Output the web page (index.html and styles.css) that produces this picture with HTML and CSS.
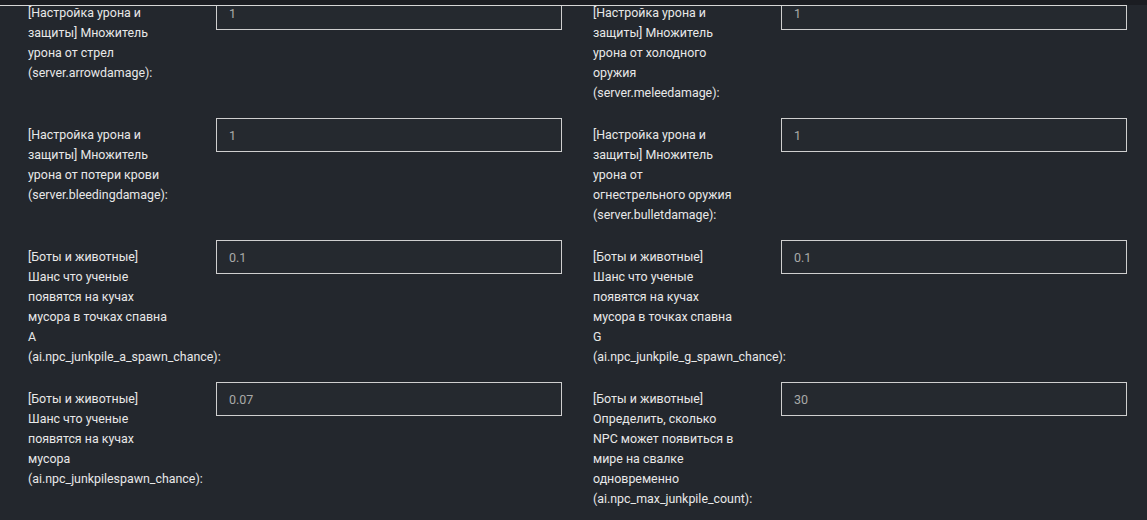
FILE: index.html
```html
<!DOCTYPE html>
<html lang="ru">
<head>
    <meta charset="UTF-8">
    <meta name="viewport" content="width=device-width, initial-scale=1.0">
    <title>Настройки сервера</title>
    <link rel="stylesheet" href="styles.css">
</head>
<body>
    <div class="topbar"><div class="topbar-line"></div></div>

    <div class="settings">
        <div class="field">
            <label class="field-label">[Настройка урона и защиты] Множитель урона от стрел (server.arrowdamage):</label>
            <input class="field-input" type="text" value="1">
        </div>
        <div class="field">
            <label class="field-label">[Настройка урона и защиты] Множитель урона от холодного оружия (server.meleedamage):</label>
            <input class="field-input" type="text" value="1">
        </div>

        <div class="field">
            <label class="field-label">[Настройка урона и защиты] Множитель урона от потери крови (server.bleedingdamage):</label>
            <input class="field-input" type="text" value="1">
        </div>
        <div class="field">
            <label class="field-label">[Настройка урона и защиты] Множитель урона от огнестрельного оружия (server.bulletdamage):</label>
            <input class="field-input" type="text" value="1">
        </div>

        <div class="field">
            <label class="field-label">[Боты и животные] Шанс что ученые появятся на кучах мусора в точках спавна A (ai.npc_junkpile_a_spawn_chance):</label>
            <input class="field-input" type="text" value="0.1">
        </div>
        <div class="field">
            <label class="field-label">[Боты и животные] Шанс что ученые появятся на кучах мусора в точках спавна G (ai.npc_junkpile_g_spawn_chance):</label>
            <input class="field-input" type="text" value="0.1">
        </div>

        <div class="field">
            <label class="field-label">[Боты и животные] Шанс что ученые появятся на кучах мусора (ai.npc_junkpilespawn_chance):</label>
            <input class="field-input" type="text" value="0.07">
        </div>
        <div class="field">
            <label class="field-label">[Боты и животные] Определить, сколько NPC может появиться в мире на свалке одновременно (ai.npc_max_junkpile_count):</label>
            <input class="field-input" type="text" value="30">
        </div>
    </div>
</body>
</html>
```

FILE: styles.css
```css
html, body {
    margin: 0;
    padding: 0;
    background: #23272d;
    font-family: 'Roboto', 'Liberation Sans', sans-serif;
    font-size: 12.4px;
    color: #e8e8e8;
    overflow: hidden;
}

.topbar {
    position: fixed;
    top: 0;
    left: 0;
    right: 0;
    height: 5px;
    background: #1b1d22;
    z-index: 10;
}

.topbar-line {
    position: absolute;
    left: 0;
    top: 5px;
    width: 1127px;
    height: 1px;
    background: #d6d6d6;
}

.settings {
    display: grid;
    grid-template-columns: 565px 565px;
    margin-top: -4px;
}

.field {
    display: grid;
    grid-template-columns: 188px 346px;
    align-items: start;
    padding-left: 28px;
    margin-bottom: 15px;
}

.field-label {
    width: 142px;
    padding-top: 7px;
    line-height: 20px;
    color: #e8e8e8;
}

.field-input {
    box-sizing: border-box;
    width: 346px;
    height: 34px;
    margin: 0;
    padding: 0 12px;
    background: #25292f;
    border: 1px solid #cfcfcf;
    border-radius: 0;
    font-family: 'Roboto', 'Liberation Sans', sans-serif;
    font-size: 12.5px;
    color: #a9a9a9;
    outline: none;
}
```
